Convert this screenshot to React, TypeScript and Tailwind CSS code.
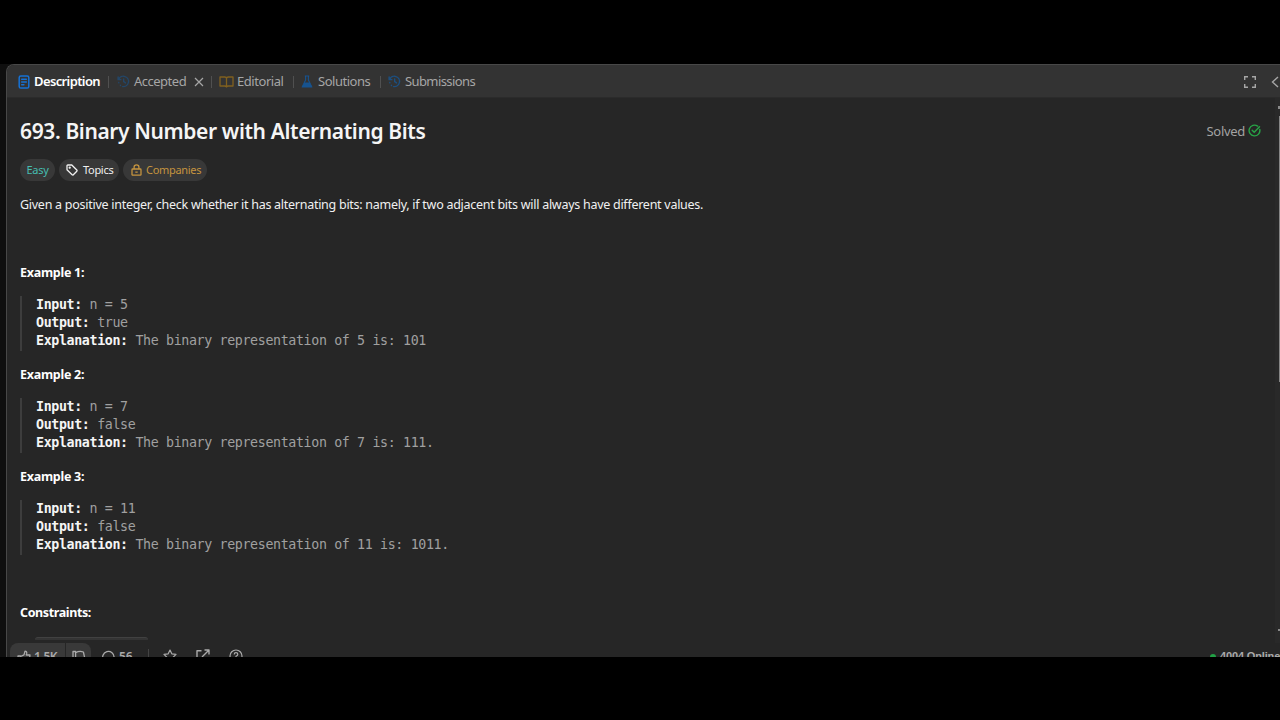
import type { ReactNode } from "react";

const examples = [
  { id: 1, input: "n = 5", output: "true", explanation: "The binary representation of 5 is: 101" },
  { id: 2, input: "n = 7", output: "false", explanation: "The binary representation of 7 is: 111." },
  { id: 3, input: "n = 11", output: "false", explanation: "The binary representation of 11 is: 1011." },
];

function HistoryIcon({ className }: { className: string }) {
  return (
    <svg viewBox="0 0 14 14" className={className} fill="none" stroke="currentColor" strokeWidth="1.5" strokeLinecap="round" strokeLinejoin="round">
      <path d="M1.2 2v3h3M1.7 4.7A5.6 5.6 0 1 1 6 12.5" />
      <path d="M7.2 4.2v3l2 1.3" />
      <path d="M1.9 8.1l.1.4M3.6 11l.2.2" />
    </svg>
  );
}

function Divider() {
  return <div className="h-3 w-px shrink-0 bg-[#505050]" />;
}

function Tab({ className, children }: { className: string; children: ReactNode }) {
  return <div className={`flex shrink-0 items-center whitespace-nowrap ${className}`}>{children}</div>;
}

function TabBar() {
  return (
    <div className="flex h-[33px] shrink-0 items-center border-b border-[#2b2b2b] bg-[#333333] pl-[11px] pt-px text-[13px] text-[#a6a6a6]">
      <Tab className="w-[90px] gap-1 font-semibold tracking-[-0.62px] text-white">
        <svg viewBox="0 0 12 14" className="h-[14px] w-3 text-[#1671d4]" fill="none" stroke="currentColor" strokeWidth="1.5" strokeLinecap="round">
          <rect x="1.2" y="1" width="9.6" height="12" rx="1.6" />
          <path d="M3.7 4.2h4.6M3.7 7h4.6M3.7 9.8h2.2" />
        </svg>
        <span className="pt-px">Description</span>
      </Tab>
      <Divider />
      <Tab className="w-[102px] pl-2 tracking-[-0.5px]">
        <HistoryIcon className="mr-1 h-[13px] w-[13px] text-[#234668]" />
        <span className="w-[60px] pt-px">Accepted</span>
        <svg viewBox="0 0 10 10" className="h-[10px] w-[10px]" fill="none" stroke="currentColor" strokeWidth="1.2">
          <path d="M1 1l8 8M9 1l-8 8" />
        </svg>
      </Tab>
      <Divider />
      <Tab className="w-[81px] gap-[3px] pl-[7px] tracking-[-0.45px]">
        <svg viewBox="0 0 15 12" className="h-3 w-[15px] text-[#80601f]" fill="none" stroke="currentColor" strokeWidth="1.3" strokeLinejoin="round">
          <path d="M7.5 2.3Q7.3 1 5.8 1H1v9h4.7q1.5 0 1.8 1M7.5 2.3Q7.7 1 9.2 1H14v9H9.3q-1.5 0-1.8 1V2.3" />
        </svg>
        <span className="pt-px">Editorial</span>
      </Tab>
      <Divider />
      <Tab className="w-[86px] gap-[5px] pl-[7px] tracking-[-0.47px]">
        <svg viewBox="0 0 12 13" className="h-[13px] w-3 text-[#17538f]">
          <path d="M3.8 1h4.4M4.6 1v4L1.2 11.9h9.6L7.4 5V1" fill="none" stroke="currentColor" strokeWidth="1.1" strokeLinejoin="round" />
          <path d="M3.3 7.5h5.4l2.3 4.6H1z" fill="currentColor" />
        </svg>
        <span className="pt-px">Solutions</span>
      </Tab>
      <Divider />
      <Tab className="gap-1 pl-[7px] tracking-[-0.6px]">
        <HistoryIcon className="h-[13px] w-[13px] text-[#1c4f80]" />
        <span className="pt-px">Submissions</span>
      </Tab>
      <svg viewBox="0 0 12 12" className="ml-auto h-3 w-3 shrink-0" fill="none" stroke="currentColor" strokeWidth="1.4">
        <path d="M.7 4V.7H4M8 .7h3.3V4M11.3 8v3.3H8M4 11.3H.7V8" />
      </svg>
      <svg viewBox="0 0 9 12" className="ml-[15px] h-3 w-[9px] shrink-0" fill="none" stroke="currentColor" strokeWidth="1.4">
        <path d="M7 1L1.5 6L7 11" />
      </svg>
    </div>
  );
}

function Tags() {
  return (
    <div className="mt-[11px] flex h-[22px] gap-1 text-[11px] tracking-[-0.3px]">
      <div className="flex w-[35px] items-center justify-center rounded-full bg-[#383838] text-[#46bdb0]">Easy</div>
      <div className="flex w-[60px] items-center gap-[5px] rounded-full bg-[#383838] pl-[7px] text-[#f0f0f0]">
        <svg viewBox="0 0 12 12" className="h-3 w-3" fill="none" stroke="currentColor" strokeWidth="1.3" strokeLinejoin="round">
          <path d="M1 1.8Q1 1 1.8 1h4l5 5q.6.6 0 1.2L7.3 10.8q-.6.6-1.2 0L1 5.8z" />
          <circle cx="3.7" cy="3.7" r=".5" fill="currentColor" />
        </svg>
        Topics
      </div>
      <div className="flex w-[84px] items-center gap-1 rounded-full bg-[#383838] pl-2 text-[#c5943f]">
        <svg viewBox="0 0 11 12" className="h-3 w-[11px]" fill="none" stroke="currentColor" strokeWidth="1.3" strokeLinejoin="round">
          <rect x="1" y="5" width="9" height="6.2" rx=".7" />
          <path d="M3.1 5V3Q3.1.8 5.5.8T7.9 3v2M4.3 8.1h2.4" />
        </svg>
        Companies
      </div>
    </div>
  );
}

function Example({ id, input, output, explanation }: (typeof examples)[number]) {
  return (
    <section className="h-[102px]">
      <h2 className="h-5 text-[12.5px] font-bold leading-5 tracking-[-0.27px] text-white">Example {id}:</h2>
      <pre className="mt-[13px] h-[55px] border-l-2 border-[#3d3d3d] pl-[14px] font-['DejaVu_Sans_Mono',monospace] text-[13.3px] leading-[18px] tracking-[-0.36px] text-[#a0a0a0]">
        <b className="text-[#f5f5f5]">Input:</b> {input}{"\n"}
        <b className="text-[#f5f5f5]">Output:</b> {output}{"\n"}
        <b className="text-[#f5f5f5]">Explanation:</b> {explanation}
      </pre>
    </section>
  );
}

function Footer() {
  return (
    <footer className="flex h-[14px] shrink-0 items-start overflow-hidden pl-[3px] text-[12px] text-[#aaaaaa]">
      <div className="flex h-[27px] w-[55px] shrink-0 items-center gap-[3px] rounded-l-lg bg-[#393939] pl-[7px]">
        <svg viewBox="0 0 14 14" className="h-[14px] w-[14px]" fill="none" stroke="currentColor" strokeWidth="1.3" strokeLinejoin="round">
          <path d="M1 6h2.5v6.5H1zM3.5 6.5L7 4.8 8 1.2q2 0 1.7 2.2L9.2 5H13l-1 7.5H3.5" />
        </svg>
        <span className="font-semibold tracking-[-0.4px]">1.5K</span>
      </div>
      <div className="ml-px flex h-[27px] w-[25px] shrink-0 items-center rounded-r-lg bg-[#393939] pl-[6px]">
        <svg viewBox="0 0 14 14" className="h-[14px] w-[14px]" fill="none" stroke="currentColor" strokeWidth="1.3" strokeLinejoin="round">
          <path d="M1 1.5h2.6v6.3H1zM3.6 2.8q3.8-2.2 7.8-.8l1.3 6H9l.7 3q0 2-1.7 1.8L6.5 9l-2.9-1.2" />
        </svg>
      </div>
      <div className="ml-[10px] flex h-[27px] w-[47px] shrink-0 items-center gap-1">
        <svg viewBox="0 0 14 14" className="h-[14px] w-[14px]" fill="none" stroke="currentColor" strokeWidth="1.3">
          <path d="M2.2 12.5l.6-2A5.7 5.7 0 1 1 5 12.3z" />
        </svg>
        <span className="font-semibold">56</span>
      </div>
      <div className="mt-1.5 h-4 w-px shrink-0 bg-[#444444]" />
      <div className="flex h-[26px] shrink-0 items-center gap-[19px] pl-[14px]">
        <svg viewBox="0 0 14 14" className="h-[14px] w-[14px]" fill="none" stroke="currentColor" strokeWidth="1.2" strokeLinejoin="round">
          <path d="M7 1l1.8 3.8 4.2.6-3 3 .7 4.2L7 10.6l-3.7 2 .7-4.2-3-3 4.2-.6z" />
        </svg>
        <svg viewBox="0 0 14 14" className="h-[14px] w-[14px]" fill="none" stroke="currentColor" strokeWidth="1.4" strokeLinejoin="round">
          <path d="M5.5 1.8H1V13h11V8.5M8.5 1H13v4.5M13 1L6 8" />
        </svg>
        <svg viewBox="0 0 14 14" className="h-[14px] w-[14px]" fill="none" stroke="currentColor" strokeWidth="1.2">
          <circle cx="7" cy="7" r="6" />
          <path d="M5.2 5.5q0-1.8 1.8-1.8t1.8 1.6Q8.8 6.5 7 7.2v1M7 9.3v1" />
        </svg>
      </div>
      <div className="ml-auto flex h-[27px] w-[70px] shrink-0 items-center gap-1 whitespace-nowrap font-['Liberation_Sans',sans-serif] text-[11px] font-bold tracking-[-0.15px]">
        <span className="h-[6px] w-[6px] shrink-0 rounded-full bg-[#21a045]" />
        4004 Online
      </div>
    </footer>
  );
}

export default function App() {
  return (
    <main className="h-[720px] w-[1280px] overflow-hidden bg-black pt-16 font-['Noto_Sans',sans-serif]">
      <div className="flex h-[593px] bg-[#0f0f0f] pl-[6px]">
        <div className="flex min-w-0 flex-1 flex-col overflow-hidden rounded-tl-lg border-l border-t border-[#484848] bg-[#262626]">
          <TabBar />
          <div className="flex min-h-0 flex-1 overflow-hidden">
            <div className="min-w-0 flex-1 pl-[13px]">
              <div className="mt-[18px] flex h-8 items-center justify-between">
                <h1 className="text-[21px] font-semibold tracking-[-0.38px] text-[#f5f5f5]">693. Binary Number with Alternating Bits</h1>
                <div className="flex items-center gap-[3px] pr-[14px] text-[13px] tracking-[-0.3px] text-[#a3a3a3]">
                  Solved
                  <svg viewBox="0 0 13 13" className="mb-1 h-[13px] w-[13px] text-[#28a346]" fill="none" stroke="currentColor" strokeWidth="1.4" strokeLinecap="round">
                    <path d="M11.8 5.5a5.4 5.4 0 1 1-2.2-3.4M4.2 6.3l2 2 5.3-5.5" />
                  </svg>
                </div>
              </div>
              <Tags />
              <p className="mt-[14px] h-5 text-[12.5px] leading-5 tracking-[-0.27px] text-[#f0f0f0]">
                Given a positive integer, check whether it has alternating bits: namely, if two adjacent bits will always have different values.
              </p>
              <div className="mt-[48px]">
                {examples.map((example) => (
                  <Example key={example.id} {...example} />
                ))}
              </div>
              <h2 className="mt-[34px] h-5 text-[12.5px] font-bold leading-5 tracking-[-0.38px] text-white">Constraints:</h2>
              <div className="ml-[15px] mt-[14px] h-[3px] w-[113px] rounded-t-[5px] border-t border-[#414141] bg-[#343434]" />
            </div>
            <div className="flex w-[5px] shrink-0 flex-col items-end bg-[#292929] pt-2">
              <div className="h-[3px] w-[2px] bg-[#8a8a8a]" />
              <div className="mt-[7px] h-[266px] w-px bg-[#858585]" />
              <div className="mt-[247px] h-[2px] w-[2px] bg-[#8a8a8a]" />
            </div>
          </div>
          <Footer />
        </div>
      </div>
    </main>
  );
}
